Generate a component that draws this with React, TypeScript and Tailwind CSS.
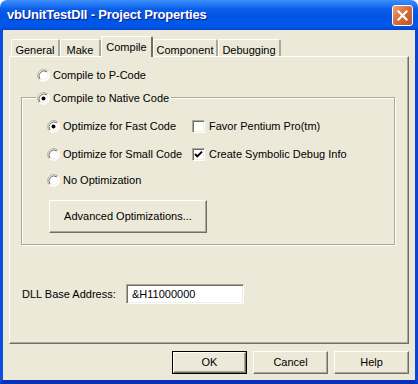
import React from 'react';

const FONT = { fontFamily: '"Liberation Sans", Arial, sans-serif' };

const Radio: React.FC<{ checked?: boolean }> = ({ checked }) => (
  <svg width="13" height="13" viewBox="0 0 13 13" className="shrink-0">
    <circle cx="6.5" cy="6.5" r="6" fill="#ffffff" />
    <path d="M2.26 10.74 A6 6 0 0 1 10.74 2.26" stroke="#aca899" strokeWidth="1" fill="none" />
    <path d="M3 10 A5 5 0 0 1 10 3" stroke="#716f64" strokeWidth="1" fill="none" />
    <path d="M10.74 2.26 A6 6 0 0 1 2.26 10.74" stroke="#ffffff" strokeWidth="1" fill="none" />
    <path d="M10 3 A5 5 0 0 1 3 10" stroke="#f1efe2" strokeWidth="1" fill="none" />
    {checked && <circle cx="6.5" cy="6.5" r="2" fill="#000000" />}
  </svg>
);

const Check: React.FC<{ checked?: boolean }> = ({ checked }) => (
  <span className="shrink-0 w-[13px] h-[13px] bg-white border-t border-l border-[#aca899] border-r border-b border-r-white border-b-white shadow-[inset_1px_1px_0_#716f64,inset_-1px_-1px_0_#f1efe2] flex items-center justify-center">
    {checked && (
      <svg width="9" height="9" viewBox="0 0 9 9">
        <path d="M1 4 L3.3 6.4 L8 1.6" stroke="#000" strokeWidth="1.9" fill="none" />
      </svg>
    )}
  </span>
);

const Button: React.FC<{ children: React.ReactNode; className?: string; isDefault?: boolean }> = ({ children, className, isDefault }) => (
  <div className={`${isDefault ? 'border border-black' : ''} ${className}`}>
    <div className="w-full h-full bg-[#ece9d8] border-t border-l border-white border-r border-b border-r-[#716f64] border-b-[#716f64] shadow-[inset_-1px_-1px_0_#aca899] flex items-center justify-center text-[11px] text-black">
      {children}
    </div>
  </div>
);

const tabs = [
  { label: 'General', w: 'w-[49px]' },
  { label: 'Make', w: 'w-[41px]' },
  { label: 'Compile', w: 'w-[52px]', active: true },
  { label: 'Component', w: 'w-[65px]' },
  { label: 'Debugging', w: 'w-[63px]' },
];

export default function App() {
  return (
    <div className="w-[418px] h-[384px] flex flex-col bg-white" style={FONT}>
      {/* title bar */}
      <div className="h-[30px] shrink-0 rounded-t-[7px] bg-[linear-gradient(to_bottom,#3d8ffd_0%,#2a7ef7_12%,#0a5ee8_30%,#0054e3_55%,#0058ea_85%,#0046cf_100%)] flex items-center pl-[7px] pr-[5px]">
        <span className="text-white font-bold text-[13px] tracking-[-0.2px] [text-shadow:1px_1px_0_#0a1e8a] flex-1">vbUnitTestDll - Project Properties</span>
        <div className="w-[21px] h-[21px] rounded-[3px] border border-white bg-[linear-gradient(135deg,#eba47c_0%,#d6703c_45%,#bb5420_100%)] flex items-center justify-center">
          <svg width="11" height="11" viewBox="0 0 11 11">
            <path d="M1.5 1.5 L9.5 9.5 M9.5 1.5 L1.5 9.5" stroke="#fff" strokeWidth="2.2" strokeLinecap="square" />
          </svg>
        </div>
      </div>

      {/* body */}
      <div className="flex-1 bg-[#ece9d8] border-l-[3px] border-r-[3px] border-b-[4px] border-l-[#0a4fe0] border-r-[#0a45d8] border-b-[#0830b8] flex flex-col">
        <div className="pt-[6px] pl-[6px]">
          <div className="flex items-end h-[21px] pl-[2px]">
            {tabs.map((t) =>
              t.active ? (
                <div key={t.label} className={`${t.w} h-[21px] relative z-10 bg-[#ece9d8] border-t border-l border-white border-r-2 border-r-[#716f64] rounded-t-[2px] flex justify-center pt-[2px] text-[11px] text-black`}>
                  {t.label}
                </div>
              ) : (
                <div key={t.label} className={`${t.w} h-[17px] mb-px bg-[#ece9d8] border-t border-l border-white border-r-2 border-r-[#aca899] rounded-t-[2px] flex justify-center pt-[2px] text-[11px] text-black`}>
                  {t.label}
                </div>
              )
            )}
          </div>

          {/* panel */}
          <div className="-mt-px w-[400px] h-[288px] border-t border-l border-white border-r border-b border-r-[#716f64] border-b-[#716f64] shadow-[inset_-1px_-1px_0_#aca899] text-[11px] text-black">
            <div className="mt-[10px] ml-[27px] h-[16px] flex items-center gap-[3px]">
              <Radio />
              <span>Compile to P-Code</span>
            </div>

            {/* group frame */}
            <div className="relative mt-[14px] ml-[11px] w-[374px] h-[148px] border border-[#aca899] shadow-[1px_1px_0_#ffffff,inset_1px_1px_0_#ffffff]">
              <div className="absolute left-[14px] -top-[8px] h-[16px] pl-[1px] pr-[2px] bg-[#ece9d8] flex items-center gap-[3px]">
                <Radio checked />
                <span>Compile to Native Code</span>
              </div>

              <div className="pt-[20px] pl-[25px]">
                <div className="flex h-[16px] items-center">
                  <div className="w-[145px] flex items-center gap-[3px]">
                    <Radio checked />
                    <span>Optimize for Fast Code</span>
                  </div>
                  <div className="flex items-center gap-[4px]">
                    <Check />
                    <span>Favor Pentium Pro(tm)</span>
                  </div>
                </div>
                <div className="mt-[12px] flex h-[16px] items-center">
                  <div className="w-[145px] flex items-center gap-[3px]">
                    <Radio />
                    <span>Optimize for Small Code</span>
                  </div>
                  <div className="flex items-center gap-[4px]">
                    <Check checked />
                    <span>Create Symbolic Debug Info</span>
                  </div>
                </div>
                <div className="mt-[10px] flex h-[16px] items-center gap-[3px]">
                  <Radio />
                  <span>No Optimization</span>
                </div>
                <Button className="mt-[12px] ml-[2px] w-[158px] h-[33px]">Advanced Optimizations...</Button>
              </div>
            </div>

            {/* dll base */}
            <div className="mt-[39px] ml-[12px] flex items-center">
              <span className="w-[104px]">DLL Base Address:</span>
              <div className="w-[118px] h-[20px] bg-white border-t border-l border-[#aca899] border-r border-b border-r-white border-b-white shadow-[inset_1px_1px_0_#716f64,inset_-1px_-1px_0_#f1efe2] flex items-center pl-[5px]">
                &amp;H11000000
              </div>
            </div>
          </div>
        </div>

        {/* dialog buttons */}
        <div className="mt-[7px] pr-[6px] flex justify-end gap-[6px]">
          <Button isDefault className="w-[75px] h-[23px]">OK</Button>
          <Button className="w-[75px] h-[23px]">Cancel</Button>
          <Button className="w-[75px] h-[23px]">Help</Button>
        </div>
      </div>
    </div>
  );
}
